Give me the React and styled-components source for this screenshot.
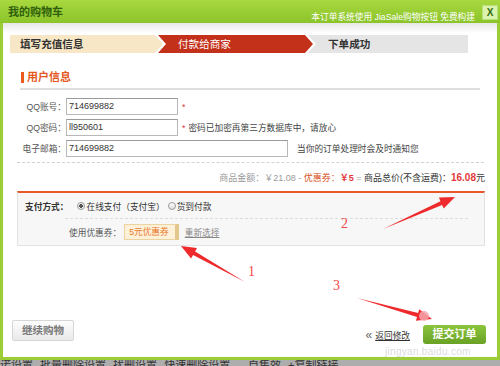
import React from 'react';
import styled, { createGlobalStyle } from 'styled-components';

const GlobalStyle = createGlobalStyle`
  body {
    margin: 0;
    background: #fff;
    font-family: "Liberation Sans", "Noto Sans CJK SC", sans-serif;
  }
`;

const Page = styled.div`
  position: relative;
  width: 500px;
  height: 366px;
  overflow: hidden;
  background: #fff;
`;

const Frame = styled.div`
  box-sizing: border-box;
  height: 360px;
  border: 3px solid #9ccd35;
  border-top: 0;
  display: flex;
  flex-direction: column;
  background: linear-gradient(to bottom, #ffffff 0, #ffffff 23px, #e7e7e7 23px, #ffffff 33px);
`;

const Header = styled.div`
  height: 23px;
  margin: 0 -3px;
  padding: 0 2px 0 8px;
  display: flex;
  align-items: flex-start;
  background: linear-gradient(to bottom, #a9d83f, #8bc42a);
`;

const Title = styled.div`
  margin-top: 6px;
  font-size: 11px;
  line-height: 12px;
  font-weight: bold;
  color: #2f5f0c;
`;

const Powered = styled.div`
  margin: 12px 0 0 auto;
  font-size: 8.7px;
  line-height: 10px;
  color: #fff;
`;

const Close = styled.div`
  box-sizing: border-box;
  width: 16px;
  height: 15px;
  margin: 5px 0 0 7px;
  border: 1px solid #b6e07a;
  background: #dcf3ae;
  color: #2f6a10;
  font-size: 10px;
  line-height: 13px;
  font-weight: bold;
  text-align: center;
`;

const Steps = styled.div`
  display: flex;
  margin: 12px 0 0 7px;
  height: 18px;
`;

const Step = styled.div`
  box-sizing: border-box;
  width: ${p => p.$w}px;
  height: 18px;
  margin-left: ${p => (p.$first ? 0 : -5)}px;
  padding-left: ${p => (p.$first ? 10 : 20)}px;
  font-size: 10.6px;
  line-height: 18px;
  font-weight: ${p => (p.$active ? 'normal' : 'bold')};
  color: ${p => (p.$active ? '#fff' : '#333')};
  background: ${p => p.$bg};
  clip-path: ${p =>
    p.$first
      ? 'polygon(0 0, calc(100% - 8px) 0, 100% 50%, calc(100% - 8px) 100%, 0 100%)'
      : p.$last
      ? 'polygon(0 0, 100% 0, 100% 100%, 0 100%, 8px 50%)'
      : 'polygon(0 0, calc(100% - 8px) 0, 100% 50%, calc(100% - 8px) 100%, 0 100%, 8px 50%)'};
`;

const SectionTitle = styled.div`
  display: flex;
  align-items: center;
  gap: 3px;
  margin: 19px 0 0 18px;
  font-size: 11px;
  line-height: 11px;
  font-weight: bold;
  color: #e4591f;

  &::before {
    content: '';
    width: 3px;
    height: 11px;
    background: #ea5b1e;
  }
`;

const Rule = styled.div`
  height: 2px;
  margin: 5px 17px 0 17px;
  background: #dedede;
`;

const Form = styled.div`
  margin-top: 8px;
  display: flex;
  flex-direction: column;
  gap: 4px;
`;

const Row = styled.div`
  display: flex;
  align-items: center;
  height: 17px;
`;

const Label = styled.div`
  width: 63px;
  text-align: right;
  font-size: 8.7px;
  color: #555;
`;

const Input = styled.div`
  box-sizing: border-box;
  width: ${p => p.$w}px;
  height: 17px;
  padding: 0 2px;
  border: 1px solid #b8b8b8;
  border-top-color: #9a9a9a;
  font-size: 9px;
  line-height: 15px;
  color: #333;
  background: #fff;
`;

const Hint = styled.div`
  margin-left: ${p => p.$gap}px;
  font-size: 8.7px;
  color: #444;
  white-space: nowrap;
`;

const Star = styled.span`
  color: #e4393c;
  margin-right: 3px;
`;

const Dashed = styled.div`
  margin: 5px 13px 0 14px;
  border-top: 1px dashed #d2d2d2;
`;

const Price = styled.div`
  margin-top: 9px;
  padding-right: 12px;
  text-align: right;
  font-size: 9px;
  line-height: 12px;
  color: #333;
  white-space: nowrap;
`;

const Tone = styled.span`
  color: ${p => p.$c};
  font-weight: ${p => (p.$b ? 'bold' : 'normal')};
  font-size: ${p => p.$s || 9}px;
`;

const PayBox = styled.div`
  box-sizing: border-box;
  height: 55px;
  margin: 7px 12px 0 14px;
  border: 1px solid #e2e2e2;
  border-top: 2px solid #e9572a;
  background: #f7f7f7;
`;

const PayRow = styled.div`
  display: flex;
  align-items: center;
  padding: 7px 0 0 7px;
  height: 12px;
  font-size: 8.7px;
  color: #333;
`;

const PayLabel = styled.span`
  font-weight: bold;
  margin-right: 9px;
`;

const Radio = styled.span`
  box-sizing: border-box;
  width: 8px;
  height: 8px;
  margin-left: ${p => p.$gap || 0}px;
  margin-right: 1px;
  border-radius: 50%;
  border: 1px solid #9a9a9a;
  background: ${p => (p.$on ? 'radial-gradient(circle, #555 0 1.6px, #eee 2px)' : 'linear-gradient(#fff, #ddd)')};
`;

const CouponRow = styled.div`
  display: flex;
  align-items: center;
  margin: 6px 16px 0 47px;
  padding: 5px 0 0 4px;
  border-top: 1px dashed #dcdcdc;
  font-size: 8.7px;
  color: #555;
`;

const Coupon = styled.span`
  box-sizing: border-box;
  height: 16px;
  margin-left: 3px;
  padding: 0 6px 0 4px;
  border: 1px solid #ecd39f;
  border-right: 4px solid #e2c68c;
  background: #fdf1d9;
  line-height: 14px;
  color: #e8782a;
`;

const Reselect = styled.span`
  margin-left: 6px;
  color: #888;
  text-decoration: underline;
`;

const Footer = styled.div`
  margin-top: auto;
  display: flex;
  justify-content: space-between;
  align-items: flex-end;
  padding: 0 11px 13px 9px;
`;

const GrayButton = styled.div`
  box-sizing: border-box;
  width: 62px;
  height: 21px;
  margin-bottom: 3px;
  border: 1px solid #d6d6d6;
  border-radius: 2px;
  background: linear-gradient(#fdfdfd, #e9e9e9);
  font-size: 10.5px;
  line-height: 19px;
  font-weight: bold;
  text-align: center;
  color: #777;
`;

const RightGroup = styled.div`
  display: flex;
  align-items: center;
`;

const Back = styled.span`
  font-size: 8.7px;
  color: #333;

  b {
    font-size: 12px;
    font-weight: normal;
    color: #666;
    margin-right: 3px;
  }

  u {
    text-decoration: underline;
  }
`;

const SubmitButton = styled.div`
  box-sizing: border-box;
  width: 63px;
  height: 19px;
  margin-left: 13px;
  border-radius: 3px;
  background: linear-gradient(#8cc63e, #68a124);
  font-size: 11px;
  line-height: 19px;
  font-weight: bold;
  text-align: center;
  color: #fff;
`;

const BackdropStrip = styled.div`
  height: 6px;
  overflow: hidden;
  background: #adadad;
  font-size: 11px;
  line-height: 10px;
  color: #333;
  white-space: nowrap;
  word-spacing: 4px;
`;

const Watermark = styled.div`
  position: absolute;
  left: 385px;
  top: 346px;
  font-size: 10px;
  color: rgba(210, 210, 210, 0.8);
  letter-spacing: 0.3px;
`;

const Overlay = styled.svg`
  position: absolute;
  left: 0;
  top: 0;
  pointer-events: none;
`;

const Num = styled.text`
  font-family: "Liberation Serif", serif;
  font-size: 14px;
  fill: #f24848;
`;

function arrow(x1, y1, x2, y2, headLen = 15, headW = 12, shaftW = 4) {
  const len = Math.hypot(x2 - x1, y2 - y1);
  const dx = (x2 - x1) / len;
  const dy = (y2 - y1) / len;
  const nx = -dy;
  const ny = dx;
  const bx = x2 - dx * headLen;
  const by = y2 - dy * headLen;
  const pts = [
    [x1, y1],
    [bx + (nx * shaftW) / 2, by + (ny * shaftW) / 2],
    [bx + (nx * headW) / 2, by + (ny * headW) / 2],
    [x2, y2],
    [bx - (nx * headW) / 2, by - (ny * headW) / 2],
    [bx - (nx * shaftW) / 2, by - (ny * shaftW) / 2],
  ];
  return pts.map(p => p.map(v => v.toFixed(1)).join(',')).join(' ');
}

const arrows = [
  [245, 282, 181, 246],
  [383, 229, 455, 197],
  [357, 298, 432, 319],
];

export default function App() {
  return (
    <Page>
      <GlobalStyle />
      <Frame>
        <Header>
          <Title>我的购物车</Title>
          <Powered>本订单系统使用 JiaSale购物按钮 免费构建</Powered>
          <Close>X</Close>
        </Header>

        <Steps>
          <Step $first $w={153} $bg="#f7e7c6">填写充值信息</Step>
          <Step $active $w={155} $bg="#c4311b">付款给商家</Step>
          <Step $last $w={160} $bg="#e5e5e5">下单成功</Step>
        </Steps>

        <SectionTitle>用户信息</SectionTitle>
        <Rule />

        <Form>
          <Row>
            <Label>QQ账号：</Label>
            <Input $w={112}>714699882</Input>
            <Hint $gap={4}><Star>*</Star></Hint>
          </Row>
          <Row>
            <Label>QQ密码：</Label>
            <Input $w={112}>ll950601</Input>
            <Hint $gap={4}><Star>*</Star>密码已加密再第三方数据库中，请放心</Hint>
          </Row>
          <Row>
            <Label>电子邮箱：</Label>
            <Input $w={222}>714699882</Input>
            <Hint $gap={9}>当你的订单处理时会及时通知您</Hint>
          </Row>
        </Form>
        <Dashed />

        <Price>
          <Tone $c="#9a9a9a">商品金额：￥21.08 - </Tone>
          <Tone $c="#d9531e">优惠券：</Tone>
          <Tone $c="#e4393c" $b>￥5</Tone>
          <Tone $c="#9a9a9a"> = </Tone>
          <Tone $c="#333">商品总价(不含运费)：</Tone>
          <Tone $c="#e4393c" $b $s={10}>16.08</Tone>
          <Tone $c="#333">元</Tone>
        </Price>

        <PayBox>
          <PayRow>
            <PayLabel>支付方式：</PayLabel>
            <Radio $on />
            <span>在线支付（支付宝）</span>
            <Radio $gap={3} />
            <span>货到付款</span>
          </PayRow>
          <CouponRow>
            使用优惠券：
            <Coupon>5元优惠券</Coupon>
            <Reselect>重新选择</Reselect>
          </CouponRow>
        </PayBox>

        <Footer>
          <GrayButton>继续购物</GrayButton>
          <RightGroup>
            <Back><b>«</b><u>返回修改</u></Back>
            <SubmitButton>提交订单</SubmitButton>
          </RightGroup>
        </Footer>
      </Frame>
      <BackdropStrip>诺设置 批量删除设置 扰删设置 快速删除设置 - 自集效 +复制链接</BackdropStrip>

      <Watermark>jingyan.baidu.com</Watermark>

      <Overlay width="500" height="366" viewBox="0 0 500 366">
        {arrows.map((a, i) => (
          <polygon key={i} points={arrow(...a)} fill="#ef2a2c" />
        ))}
        <circle cx="424" cy="316" r="5" fill="#f6a3ad" opacity="0.85" />
        <Num x="248" y="276">1</Num>
        <Num x="341" y="228">2</Num>
        <Num x="333" y="290">3</Num>
      </Overlay>
    </Page>
  );
}
